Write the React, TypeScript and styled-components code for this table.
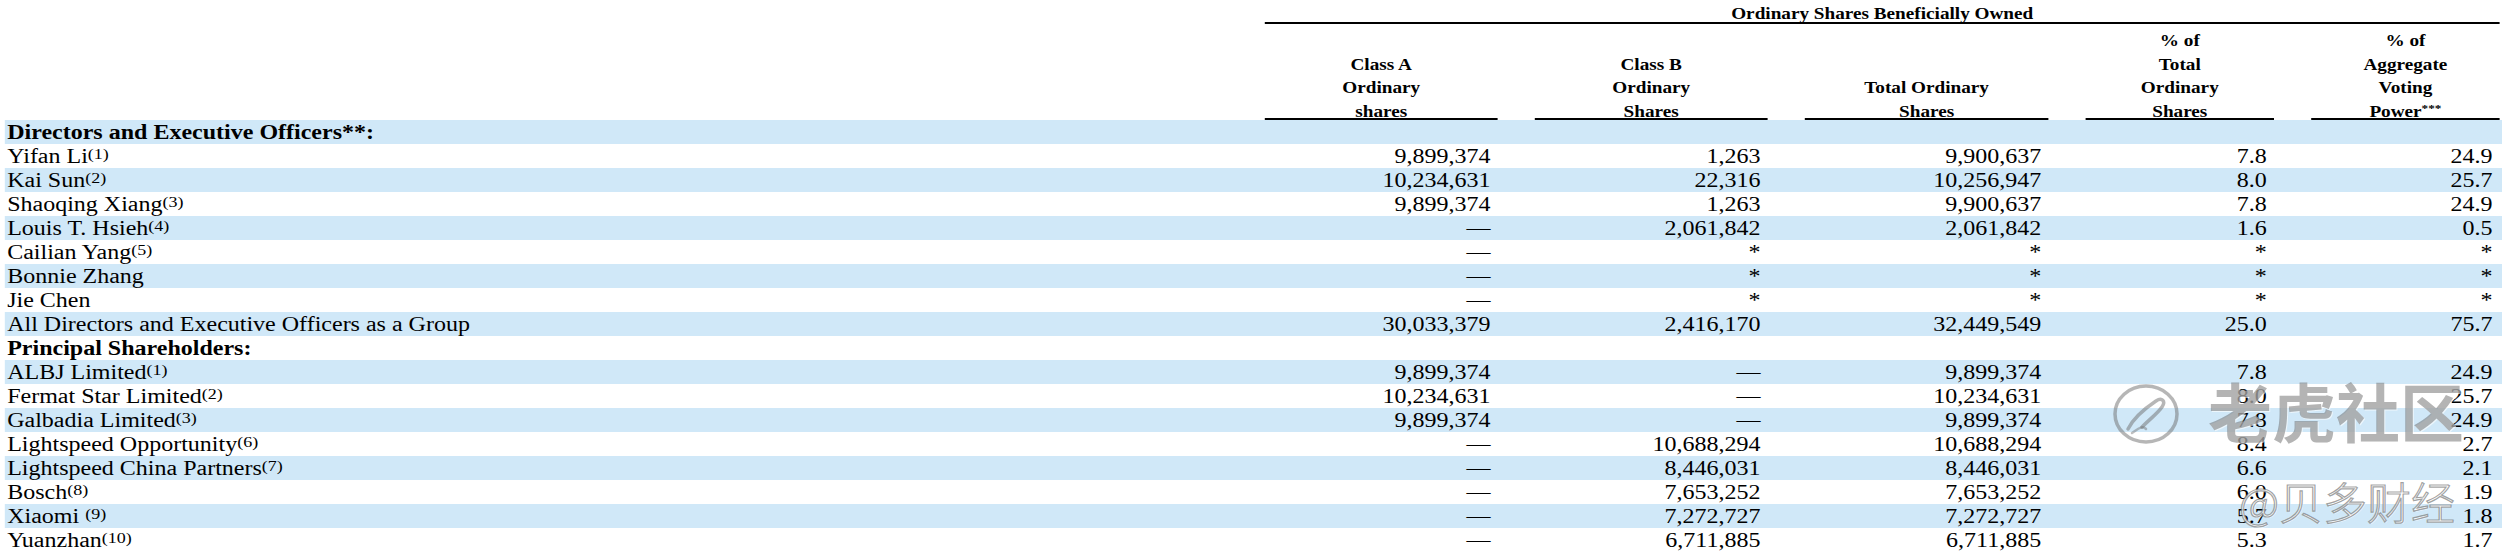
import styled, { createGlobalStyle, css } from "styled-components";

const GlobalStyle = createGlobalStyle`
  html, body {
    margin: 0;
    padding: 0;
    background: #ffffff;
  }
  body {
    font-family: "Liberation Serif", "Times New Roman", serif;
    color: #000;
  }
`;

// the whole screenshot is stretched ~1.2x horizontally, so the table is laid out narrow and scaled
const Page = styled.div`
  position: relative;
  width: 2510px;
  height: 560px;
  overflow: hidden;
`;

const Stretch = styled.div`
  width: 2092px;
  padding-left: 4px;
  box-sizing: border-box;
  transform: scaleX(1.2);
  transform-origin: 0 0;
`;

const columns = css`
  display: grid;
  grid-template-columns: 1019px 194px 194px 203px 157px 157px;
  column-gap: 31px;
  width: 2081px;
  padding-right: 2px;
  box-sizing: border-box;
`;

const TopHead = styled.div`
  ${columns}
  height: 24px;
`;

const GroupTitle = styled.div`
  grid-column: 2 / -1;
  height: 24px;
  box-sizing: border-box;
  padding-top: 5px;
  border-bottom: 2px solid #000;
  font-size: 16px;
  line-height: 17px;
  font-weight: 700;
  text-align: center;
`;

const HeadRow = styled.div`
  ${columns}
  height: 96px;
`;

const HeadCell = styled.div`
  display: flex;
  flex-direction: column;
  justify-content: flex-end;
  align-items: center;
  border-bottom: 2px solid #000;
`;

const HeadText = styled.div`
  margin-bottom: -5px;
  font-size: 16px;
  line-height: 23.5px;
  font-weight: 700;
  text-align: center;
  white-space: nowrap;
`;

const Stars = styled.sup`
  font-size: 11px;
  line-height: 0;
  vertical-align: 5px;
`;

const Row = styled.div<{ $shade: boolean }>`
  ${columns}
  height: 24px;
  font-size: 20px;
  line-height: 24px;
  background: ${(p) => (p.$shade ? "#d0e8f8" : "#ffffff")};
`;

const Label = styled.div<{ $bold?: boolean }>`
  padding-left: 2px;
  white-space: nowrap;
  font-weight: ${(p) => (p.$bold ? 700 : 400)};
`;

const Note = styled.sup`
  font-size: 15px;
  line-height: 0;
  vertical-align: 4px;
`;

const Num = styled.div`
  text-align: right;
  padding-right: 6px;
  white-space: nowrap;
`;

const LogoMark = styled.svg`
  position: absolute;
  left: 2112px;
  top: 383px;
  width: 68px;
  height: 62px;
`;

const Watermark = styled.div<{ $size: number; $left: number; $top: number; $hollow?: boolean }>`
  position: absolute;
  left: ${(p) => p.$left}px;
  top: ${(p) => p.$top}px;
  font-family: "Noto Sans CJK SC", "Noto Sans", sans-serif;
  font-size: ${(p) => p.$size}px;
  line-height: ${(p) => p.$size}px;
  font-weight: ${(p) => (p.$hollow ? 300 : 700)};
  white-space: nowrap;
  color: ${(p) => (p.$hollow ? "rgba(255, 255, 255, 0.75)" : "rgba(105, 105, 105, 0.5)")};
  -webkit-text-stroke: ${(p) => (p.$hollow ? "1.2px rgba(100, 100, 100, 0.6)" : "0")};
  text-shadow: 1px 1px 0 rgba(255, 255, 255, 0.6);
  pointer-events: none;
`;

type Line = {
  label: string;
  note?: string;
  bold?: boolean;
  v?: string[];
};

const D = "—";

const lines: Line[] = [
  { label: "Directors and Executive Officers**:", bold: true },
  { label: "Yifan Li", note: "(1)", v: ["9,899,374", "1,263", "9,900,637", "7.8", "24.9"] },
  { label: "Kai Sun", note: "(2)", v: ["10,234,631", "22,316", "10,256,947", "8.0", "25.7"] },
  { label: "Shaoqing Xiang", note: "(3)", v: ["9,899,374", "1,263", "9,900,637", "7.8", "24.9"] },
  { label: "Louis T. Hsieh", note: "(4)", v: [D, "2,061,842", "2,061,842", "1.6", "0.5"] },
  { label: "Cailian Yang", note: "(5)", v: [D, "*", "*", "*", "*"] },
  { label: "Bonnie Zhang", v: [D, "*", "*", "*", "*"] },
  { label: "Jie Chen", v: [D, "*", "*", "*", "*"] },
  {
    label: "All Directors and Executive Officers as a Group",
    v: ["30,033,379", "2,416,170", "32,449,549", "25.0", "75.7"],
  },
  { label: "Principal Shareholders:", bold: true },
  { label: "ALBJ Limited", note: "(1)", v: ["9,899,374", D, "9,899,374", "7.8", "24.9"] },
  { label: "Fermat Star Limited", note: "(2)", v: ["10,234,631", D, "10,234,631", "8.0", "25.7"] },
  { label: "Galbadia Limited", note: "(3)", v: ["9,899,374", D, "9,899,374", "7.8", "24.9"] },
  { label: "Lightspeed Opportunity", note: "(6)", v: [D, "10,688,294", "10,688,294", "8.4", "2.7"] },
  { label: "Lightspeed China Partners", note: "(7)", v: [D, "8,446,031", "8,446,031", "6.6", "2.1"] },
  { label: "Bosch", note: "(8)", v: [D, "7,653,252", "7,653,252", "6.0", "1.9"] },
  { label: "Xiaomi ", note: "(9)", v: [D, "7,272,727", "7,272,727", "5.7", "1.8"] },
  { label: "Yuanzhan", note: "(10)", v: [D, "6,711,885", "6,711,885", "5.3", "1.7"] },
];

export default function App() {
  return (
    <Page>
      <GlobalStyle />
      <Stretch>
        <TopHead>
          <div />
          <GroupTitle>Ordinary Shares Beneficially Owned</GroupTitle>
        </TopHead>
        <HeadRow>
          <div />
          <HeadCell>
            <HeadText>
              Class A<br />
              Ordinary<br />
              shares
            </HeadText>
          </HeadCell>
          <HeadCell>
            <HeadText>
              Class B<br />
              Ordinary<br />
              Shares
            </HeadText>
          </HeadCell>
          <HeadCell>
            <HeadText>
              Total Ordinary<br />
              Shares
            </HeadText>
          </HeadCell>
          <HeadCell>
            <HeadText>
              % of<br />
              Total<br />
              Ordinary<br />
              Shares
            </HeadText>
          </HeadCell>
          <HeadCell>
            <HeadText>
              % of<br />
              Aggregate<br />
              Voting<br />
              Power<Stars>***</Stars>
            </HeadText>
          </HeadCell>
        </HeadRow>
        {lines.map((line, i) => (
          <Row key={line.label} $shade={i % 2 === 0}>
            <Label $bold={line.bold}>
              {line.label}
              {line.note ? <Note>{line.note}</Note> : null}
            </Label>
            {(line.v ?? ["", "", "", "", ""]).map((val, j) => (
              <Num key={j}>{val}</Num>
            ))}
          </Row>
        ))}
      </Stretch>

      <LogoMark viewBox="0 0 68 62" fill="none">
        <ellipse cx="34" cy="31" rx="31" ry="28" stroke="rgba(110,110,110,0.5)" strokeWidth="3.5" />
        <path
          d="M16 46 C 22 34, 32 26, 44 18 C 50 14, 54 18, 50 24 C 46 30, 38 36, 30 44"
          stroke="rgba(110,110,110,0.5)"
          strokeWidth="3.5"
          strokeLinecap="round"
        />
        <path
          d="M20 50 C 26 46, 30 42, 34 46"
          stroke="rgba(110,110,110,0.45)"
          strokeWidth="2.5"
          strokeLinecap="round"
        />
      </LogoMark>
      <Watermark $size={64} $left={2208} $top={377}>
        老虎社区
      </Watermark>
      <Watermark $size={44} $left={2239} $top={479} $hollow>
        @贝多财经
      </Watermark>
    </Page>
  );
}
